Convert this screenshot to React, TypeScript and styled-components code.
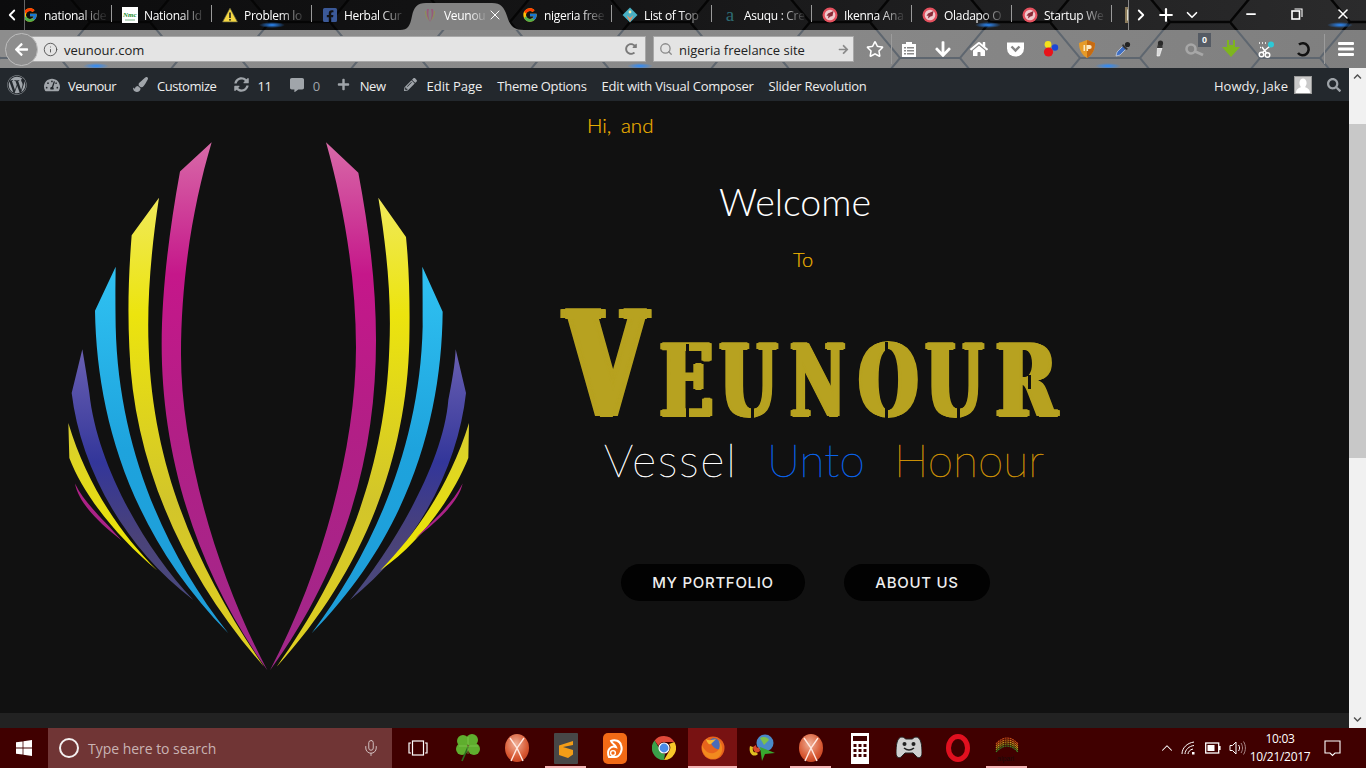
import React from "react";
import styled, { createGlobalStyle } from "styled-components";
import { FcGoogle } from "react-icons/fc";
import { FaWordpress, FaTachometerAlt, FaPaintBrush, FaSyncAlt, FaCommentAlt, FaPlus, FaPencilAlt, FaSearch, FaFacebookSquare, FaRegStar, FaArrowDown, FaHome, FaRedoAlt, FaArrowRight, FaArrowLeft, FaChevronUp, FaChevronDown } from "react-icons/fa";
import { Info, Minus, X, Plus, ChevronLeft, ChevronRight, ChevronDown, Mic, ChevronUp, Search } from "lucide-react";

const Global = createGlobalStyle`
  html, body { margin: 0; padding: 0; width: 1366px; height: 768px; overflow: hidden; background: #111; }
  * { box-sizing: border-box; }
`;

const Screen = styled.div`
  width: 1366px; height: 768px; display: flex; flex-direction: column; overflow: hidden;
  font-family: "Open Sans", "Noto Sans", sans-serif;
`;

/* ---------- browser chrome ---------- */
const Chrome = styled.header`
  position: relative; height: 68px; flex: none;
`;
const Backdrop = styled.svg`
  position: absolute; inset: 0; width: 1366px; height: 68px;
`;
const TabStrip = styled.div`
  position: relative; height: 30px; display: flex; align-items: stretch; color: #fff;
`;
const StripButton = styled.div<{ $w: number }>`
  width: ${p => p.$w}px; flex: none; display: flex; align-items: center; justify-content: center; color: #fff;
`;
const TabList = styled.div`
  width: 1105px; flex: none; display: flex; overflow: hidden; position: relative;
  border-right: 1px solid #8a8a8a; border-left: 1px solid #666;
`;
const Tab = styled.div<{ $sep?: boolean; $first?: boolean }>`
  position: relative; width: 100px; flex: none; height: 30px; padding: 0 0 0 10px;
  display: flex; align-items: center; gap: 6px;
  margin-left: ${p => (p.$first ? "-13px" : "0")};
  &::after {
    content: ""; position: absolute; right: 0; top: 5px; bottom: 8px; width: 1px;
    background: ${p => (p.$sep ? "#9a9a9a" : "transparent")};
  }
`;
const TabShape = styled.svg`
  position: absolute; left: -12px; top: 0; width: 124px; height: 30px;
`;
const Favicon = styled.span<{ $dim?: boolean }>`
  position: relative; width: 16px; height: 16px; flex: none; display: flex; align-items: center; justify-content: center; margin-top: -1px;
  opacity: ${p => (p.$dim ? 0.55 : 1)};
`;
const TabTitle = styled.span<{ $w?: number }>`
  position: relative; font-size: 12px; line-height: 16px; white-space: nowrap;
  width: ${p => p.$w ?? 62}px; margin-top: 1px; letter-spacing: -0.3px;
  -webkit-mask-image: linear-gradient(to right, #000 58%, rgba(0,0,0,.12) 95%);
  mask-image: linear-gradient(to right, #000 58%, rgba(0,0,0,.12) 95%);
`;
const TabClose = styled.span`
  position: absolute; left: 75px; top: 7px; display: flex; color: #fff;
`;
const WindowButtons = styled.div`
  display: flex; margin-left: auto; align-items: flex-start;
`;
const WindowButton = styled.div`
  width: 46px; height: 30px; display: flex; align-items: center; justify-content: center; color: #fff; padding-bottom: 2px;
`;
const NavBar = styled.div`
  position: relative; height: 38px; display: flex; align-items: center; padding: 0 0 0 5px;
`;
const BackCircle = styled.div`
  position: relative; z-index: 2; width: 33px; height: 33px; border-radius: 50%; flex: none;
  background: #8e8e8e; border: 1px solid #bdbdbd; color: #fff;
  display: flex; align-items: center; justify-content: center; margin-top: 1px;
`;
const Field = styled.div<{ $w: number; $ml: number; $pl: number; $pr: number }>`
  width: ${p => p.$w}px; margin-left: ${p => p.$ml}px; height: 26px; flex: none;
  padding: 0 ${p => p.$pr}px 0 ${p => p.$pl}px;
  background: #e4e4e4; border: 1px solid #a8a8a8; display: flex; align-items: center;
  font-size: 13px; color: #222;
`;
const UrlText = styled.span`
  margin-left: 6px; flex: 1; padding-top: 2px;
`;
const IconRow = styled.div`
  display: flex; align-items: center; margin-left: 5px; height: 38px;
`;
const ToolButton = styled.div<{ $w?: number }>`
  position: relative; width: ${p => p.$w ?? 36}px; height: 26px; flex: none; color: #fff;
  display: flex; align-items: center; justify-content: center;
`;
const ToolSep = styled.div<{ $ml?: number }>`
  width: 1px; height: 30px; flex: none; background: #9c9c9c; margin-left: ${p => p.$ml ?? 0}px;
`;
const Badge = styled.span`
  position: absolute; right: 2px; top: -3px; width: 13px; height: 14px; background: #555b64; color: #fff;
  font: bold 9px/14px "Liberation Sans", sans-serif; text-align: center;
`;

/* ---------- middle ---------- */
const Middle = styled.div`
  display: flex; height: 660px; flex: none;
`;
const PageColumn = styled.div`
  width: 1349px; flex: none; display: flex; flex-direction: column;
`;
const AdminBar = styled.nav`
  height: 33px; flex: none; background: #23282d; color: #eee; display: flex; align-items: center;
  font-size: 13px; padding-right: 7px;
`;
const AdminItem = styled.div<{ $ml?: number; $muted?: boolean }>`
  display: flex; align-items: center; gap: 6px; margin-left: ${p => p.$ml ?? 15}px; line-height: 18px;
  color: ${p => (p.$muted ? "#a0a5aa" : "#eee")}; white-space: nowrap;
`;
const AdminLabel = styled.span<{ $ls?: number }>`
  padding-top: 2px; letter-spacing: ${p => p.$ls ?? -0.3}px;
`;
const AdminIcon = styled.span`
  width: 20px; display: flex; justify-content: center; align-items: center; color: #a0a5aa;
`;
const Howdy = styled.div`
  margin-left: auto; display: flex; align-items: center; color: #eee;
`;
const Avatar = styled.span`
  width: 18px; height: 18px; margin-left: 6px; background: #c9c9c9; border: 1px solid #999; color: #fff;
  display: flex; align-items: flex-end; justify-content: center; overflow: hidden;
`;
const AdminSearch = styled.span`
  margin-left: 15px; color: #9ea3a8; display: flex; margin-right: 1px;
`;
const Hero = styled.main`
  height: 612px; flex: none; background: #111; display: flex; overflow: hidden;
`;
const LogoArt = styled.svg`
  width: 440px; height: 550px; margin: 29px 0 0 50px; flex: none;
`;
const Copy = styled.div`
  margin-left: 70px; width: 520px; display: flex; flex-direction: column;
  font-family: Lato, "Open Sans", sans-serif;
`;
const Greeting = styled.div`
  margin: 12px 0 0 27px; font-size: 20.5px; line-height: 24px; font-weight: 300; color: #f0b400; word-spacing: 4px;
  -webkit-text-stroke: 0.2px #f0b400;
`;
const Welcome = styled.div`
  margin-top: 43px; width: 470px; text-align: center; color: #fff; font-size: 37.5px; line-height: 44px; font-weight: 300;
`;
const To = styled.div`
  margin-top: 23px; width: 486px; text-align: center; color: #f0b400; font-size: 20px; line-height: 24px; font-weight: 300;
  -webkit-text-stroke: 0.2px #f0b400;
`;
const Wordmark = styled.div`
  margin-top: 32px; height: 115px; display: flex; align-items: flex-end;
  font-family: "DejaVu Serif", "Liberation Serif", serif; font-weight: 700; color: #b7a220;
`;
const Letter = styled.span<{ $w: number; $ml: number; $size: number }>`
  position: relative; display: block; width: ${p => p.$w}px; margin-left: ${p => p.$ml}px;
  font-size: ${p => p.$size}px; height: ${p => Math.round(p.$size * 0.73)}px; line-height: ${p => Math.round(p.$size * 0.73)}px;
  white-space: nowrap; flex: none;
`;
const fatShadow = (n: number) => {
  const parts: string[] = [];
  for (let i = 1; i <= n; i++) parts.push(`${i}px 0 #b7a220`, `-${i}px 0 #b7a220`);
  return parts.join(",");
};
const Glyph = styled.span<{ $sx: number; $fat: number }>`
  display: inline-block; transform: translateX(${p => p.$fat * p.$sx + 1}px) scaleX(${p => p.$sx}); transform-origin: 0 50%;
  -webkit-text-stroke: 2px #b7a220;
  text-shadow: ${p => fatShadow(p.$fat)};
`;
const Slit = styled.i<{ $x: number; $top?: number; $bottom?: number; $h: number }>`
  position: absolute; left: ${p => p.$x}px; width: 3px; height: ${p => p.$h}px; background: #111;
  ${p => (p.$top !== undefined ? `top:${p.$top}px;` : "")}
  ${p => (p.$bottom !== undefined ? `bottom:${p.$bottom}px;` : "")}
`;
const Slogan = styled.div`
  margin: 17px 0 0 44px; height: 50px; display: flex; font-size: 46px; line-height: 50px; font-weight: 100;
`;
const SloganWord = styled.span<{ $color: string; $w: number; $ls?: number }>`
  color: ${p => p.$color}; width: ${p => p.$w}px; flex: none; white-space: nowrap; letter-spacing: ${p => p.$ls ?? 0}px;
  -webkit-text-stroke: 0.45px ${p => p.$color};
`;
const Actions = styled.div`
  margin: 79px 0 0 61px; display: flex; gap: 39px;
`;
const Pill = styled.a<{ $w: number }>`
  width: ${p => p.$w}px; height: 37px; border-radius: 19px; background: #020202; color: #eee;
  display: flex; align-items: center; justify-content: center;
  font: 500 15px/1 Inter, sans-serif; letter-spacing: 0.7px;
`;
const NextStrip = styled.div`
  flex: none; height: 15px; background: #222;
`;
const Scrollbar = styled.aside`
  width: 17px; flex: none; background: #f1f1f1; display: flex; flex-direction: column; align-items: center; color: #505050;
`;
const ScrollArrow = styled.div`
  height: 17px; flex: none; display: flex; align-items: center; justify-content: center; width: 100%;
`;
const ScrollThumb = styled.div`
  width: 100%; height: 334px; margin-top: 39px; background: #c8c8c8;
`;
const ScrollTrack = styled.div`
  flex: 1;
`;

/* ---------- taskbar ---------- */
const Taskbar = styled.footer`
  height: 40px; flex: none; background: #400000; display: flex; align-items: center; color: #fff;
`;
const StartButton = styled.div`
  width: 48px; height: 40px; display: flex; align-items: center; justify-content: center; flex: none;
`;
const SearchBox = styled.div`
  width: 344px; height: 40px; background: #703535; display: flex; align-items: center; flex: none; padding-left: 11px;
`;
const Cortana = styled.span`
  width: 20px; height: 20px; border: 2.5px solid #f4f0f0; border-radius: 50%; flex: none;
`;
const SearchHint = styled.span`
  margin-left: 9px; flex: 1; font-size: 14px; color: #c9b3b3; letter-spacing: -0.03px;
`;
const MicSlot = styled.span`
  width: 20px; margin-right: 11px; display: flex; justify-content: center; color: #d3c0c0;
`;
const TaskView = styled.div`
  width: 51px; display: flex; justify-content: center; flex: none;
`;
const TaskApp = styled.div<{ $active?: boolean; $running?: boolean }>`
  position: relative; width: 49px; height: 40px; flex: none; display: flex; align-items: center; justify-content: center;
  background: ${p => (p.$active ? "#781212" : "transparent")};
  &::after {
    content: ""; position: absolute; left: ${p => (p.$active ? 0 : 4)}px; right: ${p => (p.$active ? 0 : 4)}px; bottom: 0; height: 2px;
    background: ${p => (p.$running ? "#f3b3b3" : "transparent")};
  }
`;
const Tray = styled.div`
  margin-left: auto; display: flex; align-items: center; height: 40px;
`;
const TraySlot = styled.span<{ $w: number }>`
  width: ${p => p.$w}px; display: flex; justify-content: center; flex: none;
`;
const Clock = styled.div`
  width: 64px; text-align: center; font-size: 12px; line-height: 18px; color: #fff; letter-spacing: -0.3px; margin-left: -1px;
`;
const Notify = styled.span`
  width: 54px; display: flex; justify-content: flex-start; padding-left: 12px;
`;
const AlpariWord = styled.text`
  font: 7px "Liberation Sans", sans-serif; fill: #1a0a0a;
`;
const NmcWord = styled.text`
  font: italic bold 7px "Liberation Serif", serif; fill: #1a8a2e;
`;
const ATextGlyph = styled.span`
  font: 19px/16px "Liberation Serif", serif; color: #2e6b73; position: relative;
`;

/* ---------- drawings ---------- */
const RocketFav = () => (
  <svg width="16" height="16" viewBox="0 0 16 16">
    <circle cx="8" cy="8" r="7.5" fill="#e4505e" />
    <circle cx="8" cy="8" r="5.3" fill="#f0c9cd" />
    <path d="M11.5 4 L6 6.5 4.5 9l2-.5-.5 3 2.5-2 2-.5z" fill="#8c2a38" />
  </svg>
);
const DiamondFav = () => (
  <svg width="16" height="16" viewBox="0 0 16 16">
    <path d="M8 .5 15.5 8 8 15.5.5 8z" fill="#48b0c4" />
    <path d="M8 11 11.5 8 8 15 4.5 8z" fill="#e58f64" />
    <circle cx="8" cy="5" r="1.4" fill="#f3e9b0" />
  </svg>
);
const WarnFav = () => (
  <svg width="16" height="16" viewBox="0 0 16 16">
    <path d="M8 1 15.5 15H.5z" fill="#f5d742" stroke="#5a5a3a" strokeWidth=".7" />
    <rect x="7.2" y="5.5" width="1.6" height="5.5" fill="#222" />
    <rect x="7.2" y="12" width="1.6" height="1.6" fill="#222" />
  </svg>
);
const NmcFav = () => (
  <svg width="16" height="16" viewBox="0 0 16 16">
    <rect width="16" height="16" fill="#fff" />
    <NmcWord x="1" y="10">Nmc</NmcWord>
    <path d="M3 13h10" stroke="#7ab487" strokeWidth="1" />
  </svg>
);
const VeunourFav = () => (
  <svg width="12" height="16" viewBox="0 0 12 16">
    <path d="M3 2C2 7 3 11 6 15 4 10 4 6 5 2z" fill="#a83a72" />
    <path d="M9 2C10 7 9 11 6 15 8 10 8 6 7 2z" fill="#a83a72" />
    <path d="M1 4C1 8 2 11 5 14 3 10 2 7 2 4z" fill="#9c9a30" />
    <path d="M11 4C11 8 10 11 7 14 9 10 10 7 10 4z" fill="#9c9a30" />
  </svg>
);
const Reader = () => (
  <svg width="16" height="16" viewBox="0 0 16 16" fill="#fff">
    <path d="M1 3h4V1h6v2h4v13H1z" />
    <g fill="#8a8a8a">
      <rect x="3" y="6" width="2" height="1.5" /><rect x="6" y="6" width="7" height="1.5" />
      <rect x="3" y="9" width="2" height="1.5" /><rect x="6" y="9" width="7" height="1.5" />
      <rect x="3" y="12" width="2" height="1.5" /><rect x="6" y="12" width="7" height="1.5" />
    </g>
  </svg>
);
const Pocket = () => (
  <svg width="17" height="16" viewBox="0 0 17 16">
    <path d="M0 1.5h17v6a8.5 8 0 0 1-17 0z" fill="#fff" />
    <path d="M4.5 5.5 8.5 9.5 12.5 5.5" fill="none" stroke="#858585" strokeWidth="2.4" />
  </svg>
);
const Dots = () => (
  <svg width="18" height="18" viewBox="0 0 18 18">
    <circle cx="6" cy="4.5" r="3.4" fill="#f3e21a" />
    <circle cx="13" cy="7.5" r="3.2" fill="#1b47d6" />
    <circle cx="6.5" cy="12" r="4.6" fill="#e8131a" />
  </svg>
);
const Shield = () => (
  <svg width="16" height="18" viewBox="0 0 16 18">
    <path d="M8 0 16 3C16 10 13 15 8 18 3 15 0 10 0 3z" fill="#e59a28" />
    <path d="M8 0 16 3C16 10 13 15 8 18z" fill="#c66a12" />
    <path d="M4.5 5h1.6v6H4.5zM7.5 5h3.2a2 2 0 0 1 0 4H9.1v2H7.5z" fill="#fbe9c3" />
  </svg>
);
const Dropper = ({ c = "#3f6fc4" }: { c?: string }) => (
  <svg width="16" height="16" viewBox="0 0 16 16">
    <path d="M1 15 2 11 8 5 11 8 5 14z" fill={c} stroke="#d0d8e8" strokeWidth=".7" />
    <path d="M8 3 13 8 11 9 7 5z" fill="#333" />
    <circle cx="12.5" cy="3.5" r="2.6" fill="#222" />
  </svg>
);
const SlimDropper = () => (
  <svg width="10" height="18" viewBox="0 0 10 18">
    <path d="M3 16 3.5 8H8L5.5 16z" fill="#d8d8d8" stroke="#fff" strokeWidth=".6" />
    <path d="M3 8 4 4h4.5L8.5 8z" fill="#3a3a3a" />
    <circle cx="6.5" cy="3" r="2.6" fill="#2a2a2a" />
  </svg>
);
const Wrench = () => (
  <svg width="20" height="16" viewBox="0 0 20 16">
    <circle cx="6" cy="8" r="4.5" fill="none" stroke="#a7a7a7" strokeWidth="2.6" />
    <path d="M9 10 18 14" stroke="#a7a7a7" strokeWidth="3" />
  </svg>
);
const GreenDown = () => (
  <svg width="18" height="18" viewBox="0 0 18 18">
    <path d="M5 0h2v5h4V0h2v7h5l-9 10L0 7h5z" fill="#7eb51e" />
  </svg>
);
const Scissors = () => (
  <svg width="18" height="17" viewBox="0 0 18 17" fill="none" stroke="#fff" strokeWidth="1.4">
    <circle cx="3.5" cy="13.5" r="2.3" /><circle cx="9.5" cy="14" r="2.3" />
    <path d="M4.5 11.5 12 5M8.5 12 4 6" />
    <path d="M1 2h1M4 2h1M7 2h1M2 6.5h1" strokeDasharray="1 1" />
    <circle cx="13" cy="3.5" r="3" fill="#2cc9d6" stroke="none" />
  </svg>
);
const Ring = () => (
  <svg width="16" height="16" viewBox="0 0 16 16">
    <path d="M4 3.5A6 6 0 1 1 3 12" fill="none" stroke="#111" strokeWidth="2.6" />
  </svg>
);
const Hamburger = () => (
  <svg width="16" height="14" viewBox="0 0 16 14" fill="#fff">
    <rect width="16" height="3" rx="1" /><rect y="5.5" width="16" height="3" rx="1" /><rect y="11" width="16" height="3" rx="1" />
  </svg>
);
const Restore = () => (
  <svg width="12" height="12" viewBox="0 0 12 12" fill="none" stroke="#fff">
    <rect x="1" y="3" width="7.5" height="8" strokeWidth="1.6" />
    <path d="M3.5 1H11V9" strokeWidth="1.1" />
  </svg>
);
const WinLogo = () => (
  <svg width="16" height="16" viewBox="0 0 16 16" fill="#fff">
    <path d="M0 2.3 6.6 1.4V7.6H0zM7.4 1.3 16 0V7.6H7.4zM0 8.4H6.6V14.6L0 13.7zM7.4 8.4H16V16L7.4 14.7z" />
  </svg>
);
const TaskViewIcon = () => (
  <svg width="20" height="16" viewBox="0 0 20 16" fill="none" stroke="#fff" strokeWidth="1.2">
    <rect x="4.5" y="1" width="11" height="14" /><path d="M3 3H1V13H3M17 3H19V13H17" />
  </svg>
);
const Clover = () => (
  <svg width="26" height="28" viewBox="0 0 26 28" fill="#5fae2e">
    <circle cx="8" cy="7" r="6" /><circle cx="17" cy="6" r="6" /><circle cx="7" cy="15" r="6" /><circle cx="19" cy="15" r="6" />
    <path d="M13 13 7 27" stroke="#2c6e1d" strokeWidth="1.6" />
    <path d="M13 3V20M4 12H23" stroke="#8fd15a" strokeWidth=".6" />
  </svg>
);
const XBall = ({ id }: { id: string }) => (
  <svg width="24" height="28" viewBox="0 0 24 28">
    <defs><radialGradient id={id} cx=".45" cy=".35" r=".8"><stop offset="0" stopColor="#f0b098" /><stop offset=".6" stopColor="#d85a34" /><stop offset="1" stopColor="#b83414" /></radialGradient></defs>
    <ellipse cx="12" cy="14" rx="12" ry="14" fill={`url(#${id})`} />
    <path d="M5 4 12 14 6 27M19 4 12 14 18 27" fill="none" stroke="#ffe8e0" strokeWidth="1.4" />
  </svg>
);
const Sublime = () => (
  <svg width="24" height="31" viewBox="0 0 24 31">
    <rect width="24" height="31" rx="1" fill="#474747" />
    <path d="M19 8 5 12.5V17l14 4.5V17L9 14l10-2zM5 17v5l9 3 5-3.5" fill="#f39c17" />
  </svg>
);
const UcBrowser = () => (
  <svg width="24" height="31" viewBox="0 0 24 31">
    <rect width="24" height="31" rx="5" fill="#f26a16" />
    <path d="M6 24C3 17 8 12 13 14c-1-3-4-3-5-6 4-2 9 0 10 4 2 5-1 12-6 12z" fill="none" stroke="#fff" strokeWidth="2" />
    <circle cx="10" cy="20" r="2.4" fill="none" stroke="#fff" strokeWidth="1.4" />
  </svg>
);
const ChromeIcon = () => (
  <svg width="24" height="28" viewBox="0 0 24 24">
    <path d="M12 0a12 12 0 0 1 10.4 6H12a6 6 0 0 0-5.6 3.7L2.6 4.4A12 12 0 0 1 12 0z" fill="#e04a3a" />
    <path d="M22.4 6A12 12 0 0 1 12 24l5.2-9A6 6 0 0 0 17 8z" fill="#f8c82a" />
    <path d="M2.6 4.4 7 12a6 6 0 0 0 6 5.9L12 24A12 12 0 0 1 2.6 4.4z" fill="#3aa14a" />
    <circle cx="12" cy="12" r="5" fill="#4a8be8" stroke="#fff" strokeWidth="1.2" />
  </svg>
);
const FirefoxIcon = () => (
  <svg width="24" height="28" viewBox="0 0 24 24">
    <circle cx="12" cy="12" r="11.5" fill="#e8641c" />
    <path d="M12 2a8 8 0 0 1 8 8c0 3-2 4-4 3-3-1-6-4-7-9z" fill="#4b6cb8" />
    <path d="M1 9C3 14 8 20 15 16 19 14 20 8 17 4 24 9 22 23 12 23 5 23 0 16 1 9z" fill="#f28a1e" />
    <path d="M5 3C8 5 11 4 15 3 12 6 11 7 10 8 8 9 6 7 5 3z" fill="#f7b733" />
  </svg>
);
const IdmIcon = () => (
  <svg width="28" height="28" viewBox="0 0 28 28">
    <circle cx="17" cy="9" r="8.5" fill="#4a8ac8" />
    <path d="M12 4C15 2 20 3 21 6L16 11z" fill="#7cc04a" />
    <path d="M2 12C0 20 6 24 10 20L8 18C6 19 4 17 5 13z" fill="#e0c020" />
    <path d="M5 13C5 18 9 20 12 17L11 13C9 15 8 13 8 11z" fill="#d8492a" />
    <path d="M12 13 27 19 17 20 14 27z" fill="#38a82e" />
  </svg>
);
const Calc = () => (
  <svg width="18" height="31" viewBox="0 0 18 31">
    <rect width="18" height="31" fill="#fff" />
    <rect x="2" y="3" width="14" height="5" fill="#400000" />
    {[11, 16, 21].map(y => [2.5, 7.5, 12.5].map(x => <rect key={`${x}-${y}`} x={x} y={y} width="3" height="3" fill="#400000" />))}
  </svg>
);
const Pad = () => (
  <svg width="26" height="26" viewBox="0 0 26 26">
    <path d="M6 2C1 2 0 10 0 18c0 5 4 6 6 3l3-3h8l3 3c2 3 6 2 6-3 0-8-1-16-6-16-2 0-3 2-4 2h-6C9 4 8 2 6 2z" fill="#d0d0d0" stroke="#222" />
    <circle cx="8.5" cy="9" r="2" fill="#222" /><circle cx="17.5" cy="9" r="2" fill="#222" />
    <path d="M8 13q5 4 10 0" fill="none" stroke="#222" strokeWidth="1.5" />
  </svg>
);
const Opera = () => (
  <svg width="24" height="28" viewBox="0 0 24 28">
    <ellipse cx="12" cy="14" rx="9.5" ry="11.5" fill="none" stroke="#e0101f" strokeWidth="5" />
  </svg>
);
const Alpari = () => (
  <svg width="26" height="32" viewBox="0 0 26 32">
    {[0, 1, 2, 3, 4].map(i => (
      <path key={i} d={`M2 ${16 + i * 2 - 4}Q13 ${0 + i * 2} 24 ${16 + i * 2 - 4}`} fill="none" stroke={["#c8501a", "#d07a1a", "#c8a020", "#88a020", "#3c8a2a"][i]} strokeWidth="1.1" strokeDasharray="2 .6" />
    ))}
    <AlpariWord x="3" y="29">alpari</AlpariWord>
  </svg>
);
const Person = () => (
  <svg width="16" height="16" viewBox="0 0 16 16" fill="#fff">
    <ellipse cx="8" cy="6" rx="3.6" ry="4.6" /><path d="M1 16c0-4 3-5 5-6h4c2 1 5 2 5 6z" />
  </svg>
);
const WifiTray = () => (
  <svg width="16" height="14" viewBox="0 0 16 14" fill="none" stroke="#fff">
    <path d="M1 13C1 7 6 2 13 1M4 13C4 9 8 5 13 4.5M7 13C7 11 9 8.5 12 8" />
    <rect x="11" y="11" width="2.5" height="2.5" fill="#fff" stroke="none" />
  </svg>
);
const BatteryTray = () => (
  <svg width="16" height="12" viewBox="0 0 16 12">
    <rect x=".7" y="1" width="13" height="10" fill="none" stroke="#fff" strokeWidth="1.3" />
    <rect x="2.5" y="3" width="7" height="6" fill="#fff" /><rect x="14" y="4" width="1.6" height="4" fill="#fff" />
  </svg>
);
const VolumeTray = () => (
  <svg width="17" height="16" viewBox="0 0 17 16" fill="none" stroke="#fff">
    <path d="M1 5.5H3.5L7 2V14L3.5 10.5H1z" /><path d="M9.5 5C11 7 11 9 9.5 11" />
    <path d="M12 3c2 3 2 7 0 10M14.5 1.5c2.5 4 2.5 9 0 13" stroke="#a88" />
  </svg>
);
const NotifyIcon = () => (
  <svg width="17" height="17" viewBox="0 0 17 17" fill="none" stroke="#fff" strokeWidth="1.1">
    <path d="M1 1H16V13H11L8.5 15.5 6 13H1z" />
  </svg>
);

const Stripe = ({ d, g }: { d: string; g: string }) => <path d={d} fill={`url(#${g})`} />;

const stripes: { d: string; g: string }[] = [
  { g: "lgPink", d: "M485,35 L390,118 C355,300 335,470 335,610 C335,900 420,1230 652,1540 C490,1250 393,900 393,640 C393,420 430,210 485,35Z" },
  { g: "lgPink", d: "M828,35 L925,122 C960,300 978,450 978,600 C978,900 900,1230 660,1540 C820,1250 918,900 918,620 C918,420 880,210 828,35Z" },
  { g: "lgYellow", d: "M327,193 L245,300 C235,420 233,520 238,620 C250,950 400,1270 642,1530 C470,1290 310,1000 296,620 C290,480 305,330 327,193Z" },
  { g: "lgYellow", d: "M985,193 L1068,305 C1078,400 1080,500 1078,600 C1070,950 930,1270 680,1530 C860,1290 1005,1000 1018,620 C1025,480 1010,340 985,193Z" },
  { g: "lgCyan", d: "M197,390 L135,515 C140,800 230,1140 535,1435 C340,1200 205,900 197,560 C196,500 196,450 197,390Z" },
  { g: "lgCyan", d: "M1117,390 L1178,518 C1175,800 1090,1140 785,1435 C970,1200 1110,900 1118,560 C1118,500 1118,450 1117,390Z" },
  { g: "lgPurple", d: "M97,625 L65,750 C90,950 210,1180 430,1340 C280,1190 140,950 118,750 C112,710 105,670 97,625Z" },
  { g: "lgPurple", d: "M1217,625 L1248,750 C1225,950 1110,1180 900,1340 C1030,1190 1180,950 1195,770 C1205,720 1215,670 1217,625Z" },
  { g: "lgYellow2", d: "M55,835 L58,935 C100,1040 200,1160 322,1256 C210,1150 110,1010 55,835Z" },
  { g: "lgYellow2", d: "M1257,835 L1255,935 C1210,1040 1120,1170 990,1256 C1100,1150 1200,1010 1257,835Z" },
  { g: "lgPink", d: "M75,1008 C85,1060 140,1115 215,1170 C150,1100 100,1060 75,1008Z" },
  { g: "lgPink", d: "M1238,1008 C1225,1060 1170,1110 1095,1165 C1165,1100 1210,1060 1238,1008Z" },
];

const tabs: { t: string; i: React.ReactNode; sep?: boolean; first?: boolean; active?: boolean }[] = [
  { t: "national ide", i: <FcGoogle size={16} />, sep: true, first: true },
  { t: "National Id", i: <NmcFav />, sep: true },
  { t: "Problem lo", i: <WarnFav />, sep: true },
  { t: "Herbal Cur", i: <FaFacebookSquare size={16} color="#3b5998" /> },
  { t: "Veunou", i: <VeunourFav />, active: true },
  { t: "nigeria free", i: <FcGoogle size={16} />, sep: true },
  { t: "List of Top", i: <DiamondFav />, sep: true },
  { t: "Asuqu : Cre", i: <ATextGlyph>a</ATextGlyph>, sep: true },
  { t: "Ikenna Ana", i: <RocketFav />, sep: true },
  { t: "Oladapo O", i: <RocketFav />, sep: true },
  { t: "Startup We", i: <RocketFav />, sep: true },
  { t: "", i: <svg width="10" height="16"><rect width="10" height="16" fill="#8a7a5a" /><path d="M2 2l6 6-6 6z" fill="#e0dcc8" /></svg> },
];

const admin: { icon?: React.ReactNode; label: string; muted?: boolean; ls?: number; ml?: number }[] = [
  { icon: <FaTachometerAlt size={16} />, label: "Veunour", ls: -0.6 },
  { icon: <FaPaintBrush size={15} />, label: "Customize", ls: -0.45 },
  { icon: <FaSyncAlt size={15} />, label: "11" },
  { icon: <FaCommentAlt size={14} />, label: "0", muted: true },
  { icon: <FaPlus size={13} />, label: "New", ls: -0.5, ml: 14 },
  { icon: <FaPencilAlt size={13} />, label: "Edit Page", ls: 0 },
  { label: "Theme Options" },
  { label: "Edit with Visual Composer", ls: -0.22 },
  { label: "Slider Revolution", ls: -0.25 },
];

const apps: { n: React.ReactNode; active?: boolean; running?: boolean }[] = [
  { n: <Clover /> },
  { n: <XBall id="xa" /> },
  { n: <Sublime />, running: true },
  { n: <UcBrowser /> },
  { n: <ChromeIcon /> },
  { n: <FirefoxIcon />, active: true, running: true },
  { n: <IdmIcon /> },
  { n: <XBall id="xb" />, running: true },
  { n: <Calc /> },
  { n: <Pad /> },
  { n: <Opera /> },
  { n: <Alpari />, running: true },
];

const letters = [
  { c: "E", w: 54, ml: 4, sx: 0.7, slits: [{ x: 30, top: -1, h: 19 }, { x: 30, bottom: -1, h: 19 }] },
  { c: "U", w: 64, ml: 6, sx: 0.66, slits: [{ x: 35, bottom: -2, h: 24 }] },
  { c: "N", w: 64, ml: 7, sx: 0.6, slits: [] },
  { c: "O", w: 62, ml: 4, sx: 0.68, slits: [{ x: 30, top: -3, h: 18 }, { x: 30, bottom: -3, h: 18 }] },
  { c: "U", w: 63, ml: 5, sx: 0.66, slits: [{ x: 35, bottom: -2, h: 24 }] },
  { c: "R", w: 67, ml: 7, sx: 0.73, slits: [{ x: 36, top: 30, h: 14 }] },
];

export default function App() {
  return (
    <Screen>
      <Global />
      <Chrome>
        <Backdrop viewBox="0 0 1366 68">
          <defs>
            <linearGradient id="stripDark" x1="0" x2="1" y1="0" y2="0">
              <stop offset="0" stopColor="#0c0c0d" /><stop offset=".45" stopColor="#151516" /><stop offset="1" stopColor="#2b2b2c" />
            </linearGradient>
            <linearGradient id="navGray" x1="0" x2="1" y1="0" y2="0">
              <stop offset="0" stopColor="#8d8d8d" /><stop offset=".6" stopColor="#888" /><stop offset="1" stopColor="#7f7f7f" />
            </linearGradient>
            <pattern id="hexDark" width="180" height="72" patternUnits="userSpaceOnUse" x="-30" y="-14">
              <path d="M0 36 30 0H90L120 36 90 72H30ZM120 36H180" fill="none" stroke="#050505" strokeWidth="2.5" />
            </pattern>
            <pattern id="hexLight" width="180" height="72" patternUnits="userSpaceOnUse" x="-30" y="-14">
              <path d="M0 36 30 0H90L120 36 90 72H30ZM120 36H180" fill="none" stroke="#5e666f" strokeWidth="2" />
            </pattern>
            <radialGradient id="glow"><stop offset="0" stopColor="#2c8cff" /><stop offset="1" stopColor="#2c8cff" stopOpacity="0" /></radialGradient>
          </defs>
          <rect width="1366" height="30" fill="url(#stripDark)" />
          <rect width="1366" height="30" fill="url(#hexDark)" />
          <rect y="30" width="1366" height="38" fill="url(#navGray)" />
          <rect y="30" width="1366" height="38" fill="url(#hexLight)" />
          {[272, 988, 1340, 96, 1108, 640].map((x, i) => (
            <ellipse key={x} cx={x} cy={i < 3 ? 25 : 66} rx="13" ry="3" fill="url(#glow)" />
          ))}
        </Backdrop>
        <TabStrip>
          <StripButton $w={24}><ChevronLeft size={18} strokeWidth={2.4} /></StripButton>
          <TabList>
            {tabs.map((t, i) => (
              <Tab key={i} $sep={t.sep} $first={t.first}>
                {t.active && (
                  <TabShape viewBox="0 0 124 30">
                    <path d="M0 30C8 30 10 26 12 16 14 7 17 3 26 3H92C101 3 104 7 107 16 110 26 114 30 124 30Z" fill="#828282" />
                  </TabShape>
                )}
                <Favicon $dim={t.active}>{t.i}</Favicon>
                {t.t && <TabTitle $w={t.active ? 44 : 62}>{t.t}</TabTitle>}
                {t.active && <TabClose><X size={16} strokeWidth={1.5} /></TabClose>}
              </Tab>
            ))}
          </TabList>
          <StripButton $w={24}><ChevronRight size={18} strokeWidth={2.4} /></StripButton>
          <StripButton $w={26}><Plus size={20} strokeWidth={2.6} /></StripButton>
          <StripButton $w={26}><ChevronDown size={18} strokeWidth={2.2} /></StripButton>
          <WindowButtons>
            <WindowButton><Minus size={14} strokeWidth={3} /></WindowButton>
            <WindowButton><Restore /></WindowButton>
            <WindowButton><X size={16} strokeWidth={2.4} /></WindowButton>
          </WindowButtons>
        </TabStrip>
        <NavBar>
          <BackCircle><FaArrowLeft size={15} /></BackCircle>
          <Field $w={618} $ml={-10} $pl={14} $pr={8}>
            <Info size={15} color="#555" strokeWidth={1.5} />
            <UrlText>veunour.com</UrlText>
            <FaRedoAlt size={12} color="#7a7a7a" />
          </Field>
          <Field $w={201} $ml={7} $pl={5} $pr={4}>
            <Search size={14} color="#8a8a8a" strokeWidth={2.2} />
            <UrlText>nigeria freelance site</UrlText>
            <FaArrowRight size={11} color="#8a8a8a" />
          </Field>
          <IconRow>
            <ToolButton $w={32}><FaRegStar size={18} /></ToolButton>
            <ToolSep />
            <ToolButton $w={33}><Reader /></ToolButton>
            <ToolButton><FaArrowDown size={18} /></ToolButton>
            <ToolButton><FaHome size={18} /></ToolButton>
            <ToolButton><Pocket /></ToolButton>
            <ToolButton><Dots /></ToolButton>
            <ToolButton><Shield /></ToolButton>
            <ToolButton><Dropper /></ToolButton>
            <ToolButton><SlimDropper /></ToolButton>
            <ToolButton><Wrench /><Badge>0</Badge></ToolButton>
            <ToolButton><GreenDown /></ToolButton>
            <ToolButton><Scissors /></ToolButton>
            <ToolButton><Ring /></ToolButton>
            <ToolSep $ml={3} />
            <ToolButton $w={41}><Hamburger /></ToolButton>
          </IconRow>
        </NavBar>
      </Chrome>

      <Middle>
        <PageColumn>
          <AdminBar>
            <AdminItem $ml={7}><FaWordpress size={20} color="#a0a5aa" /></AdminItem>
            {admin.map(a => (
              <AdminItem key={a.label} $muted={a.muted} $ml={a.ml}>
                {a.icon && <AdminIcon>{a.icon}</AdminIcon>}
                <AdminLabel $ls={a.ls}>{a.label}</AdminLabel>
              </AdminItem>
            ))}
            <Howdy>
              <AdminLabel $ls={0.05}>Howdy, Jake</AdminLabel>
              <Avatar><Person /></Avatar>
              <AdminSearch><FaSearch size={14} /></AdminSearch>
            </Howdy>
          </AdminBar>
          <Hero>
            <LogoArt viewBox="0 0 1320 1568" preserveAspectRatio="none">
              <defs>
                <linearGradient id="lgPink" gradientUnits="userSpaceOnUse" x1="0" y1="35" x2="0" y2="1540">
                  <stop offset="0" stopColor="#d86aa8" /><stop offset=".25" stopColor="#c5178a" /><stop offset=".55" stopColor="#b21f86" /><stop offset="1" stopColor="#a0288a" />
                </linearGradient>
                <linearGradient id="lgYellow" gradientUnits="userSpaceOnUse" x1="0" y1="193" x2="0" y2="1530">
                  <stop offset="0" stopColor="#f0e95a" /><stop offset=".25" stopColor="#ece40e" /><stop offset=".65" stopColor="#d2c52a" /><stop offset="1" stopColor="#e0d020" />
                </linearGradient>
                <linearGradient id="lgCyan" gradientUnits="userSpaceOnUse" x1="0" y1="390" x2="0" y2="1430">
                  <stop offset="0" stopColor="#30c2f2" /><stop offset=".5" stopColor="#1ea3dd" /><stop offset="1" stopColor="#1e9dd8" />
                </linearGradient>
                <linearGradient id="lgPurple" gradientUnits="userSpaceOnUse" x1="0" y1="625" x2="0" y2="1340">
                  <stop offset="0" stopColor="#6a60b2" /><stop offset=".45" stopColor="#33369a" /><stop offset=".75" stopColor="#4a4278" /><stop offset="1" stopColor="#4a4a80" />
                </linearGradient>
                <linearGradient id="lgYellow2" gradientUnits="userSpaceOnUse" x1="0" y1="835" x2="0" y2="1256">
                  <stop offset="0" stopColor="#d8ce30" /><stop offset="1" stopColor="#f0e800" />
                </linearGradient>
              </defs>
              {stripes.map((s, i) => <Stripe key={i} d={s.d} g={s.g} />)}
            </LogoArt>
            <Copy>
              <Greeting>Hi, and</Greeting>
              <Welcome>Welcome</Welcome>
              <To>To</To>
              <Wordmark>
                <Letter $w={92} $ml={0} $size={146}><Glyph $sx={0.69} $fat={8}>V</Glyph></Letter>
                {letters.map((l, i) => (
                  <Letter key={i} $w={l.w} $ml={l.ml} $size={100}>
                    <Glyph $sx={l.sx} $fat={4}>{l.c}</Glyph>
                    {l.slits.map((s, j) => <Slit key={j} $x={s.x} $top={s.top} $bottom={s.bottom} $h={s.h} />)}
                  </Letter>
                ))}
              </Wordmark>
              <Slogan>
                <SloganWord $color="#ffffff" $w={163} $ls={2}>Vessel</SloganWord>
                <SloganWord $color="#0a63e8" $w={127}>Unto</SloganWord>
                <SloganWord $color="#c98f06" $w={150}>Honour</SloganWord>
              </Slogan>
              <Actions>
                <Pill $w={184}>MY PORTFOLIO</Pill>
                <Pill $w={146}>ABOUT US</Pill>
              </Actions>
            </Copy>
          </Hero>
          <NextStrip />
        </PageColumn>
        <Scrollbar>
          <ScrollArrow><FaChevronUp size={9} /></ScrollArrow>
          <ScrollThumb />
          <ScrollTrack />
          <ScrollArrow><FaChevronDown size={9} /></ScrollArrow>
        </Scrollbar>
      </Middle>

      <Taskbar>
        <StartButton><WinLogo /></StartButton>
        <SearchBox>
          <Cortana />
          <SearchHint>Type here to search</SearchHint>
          <MicSlot><Mic size={18} strokeWidth={1.3} /></MicSlot>
        </SearchBox>
        <TaskView><TaskViewIcon /></TaskView>
        {apps.map((a, i) => <TaskApp key={i} $active={a.active} $running={a.running}>{a.n}</TaskApp>)}
        <Tray>
          <TraySlot $w={20}><ChevronUp size={18} strokeWidth={1.4} /></TraySlot>
          <TraySlot $w={24}><WifiTray /></TraySlot>
          <TraySlot $w={24}><BatteryTray /></TraySlot>
          <TraySlot $w={24}><VolumeTray /></TraySlot>
          <Clock>10:03<br />10/21/2017</Clock>
          <Notify><NotifyIcon /></Notify>
        </Tray>
      </Taskbar>
    </Screen>
  );
}
